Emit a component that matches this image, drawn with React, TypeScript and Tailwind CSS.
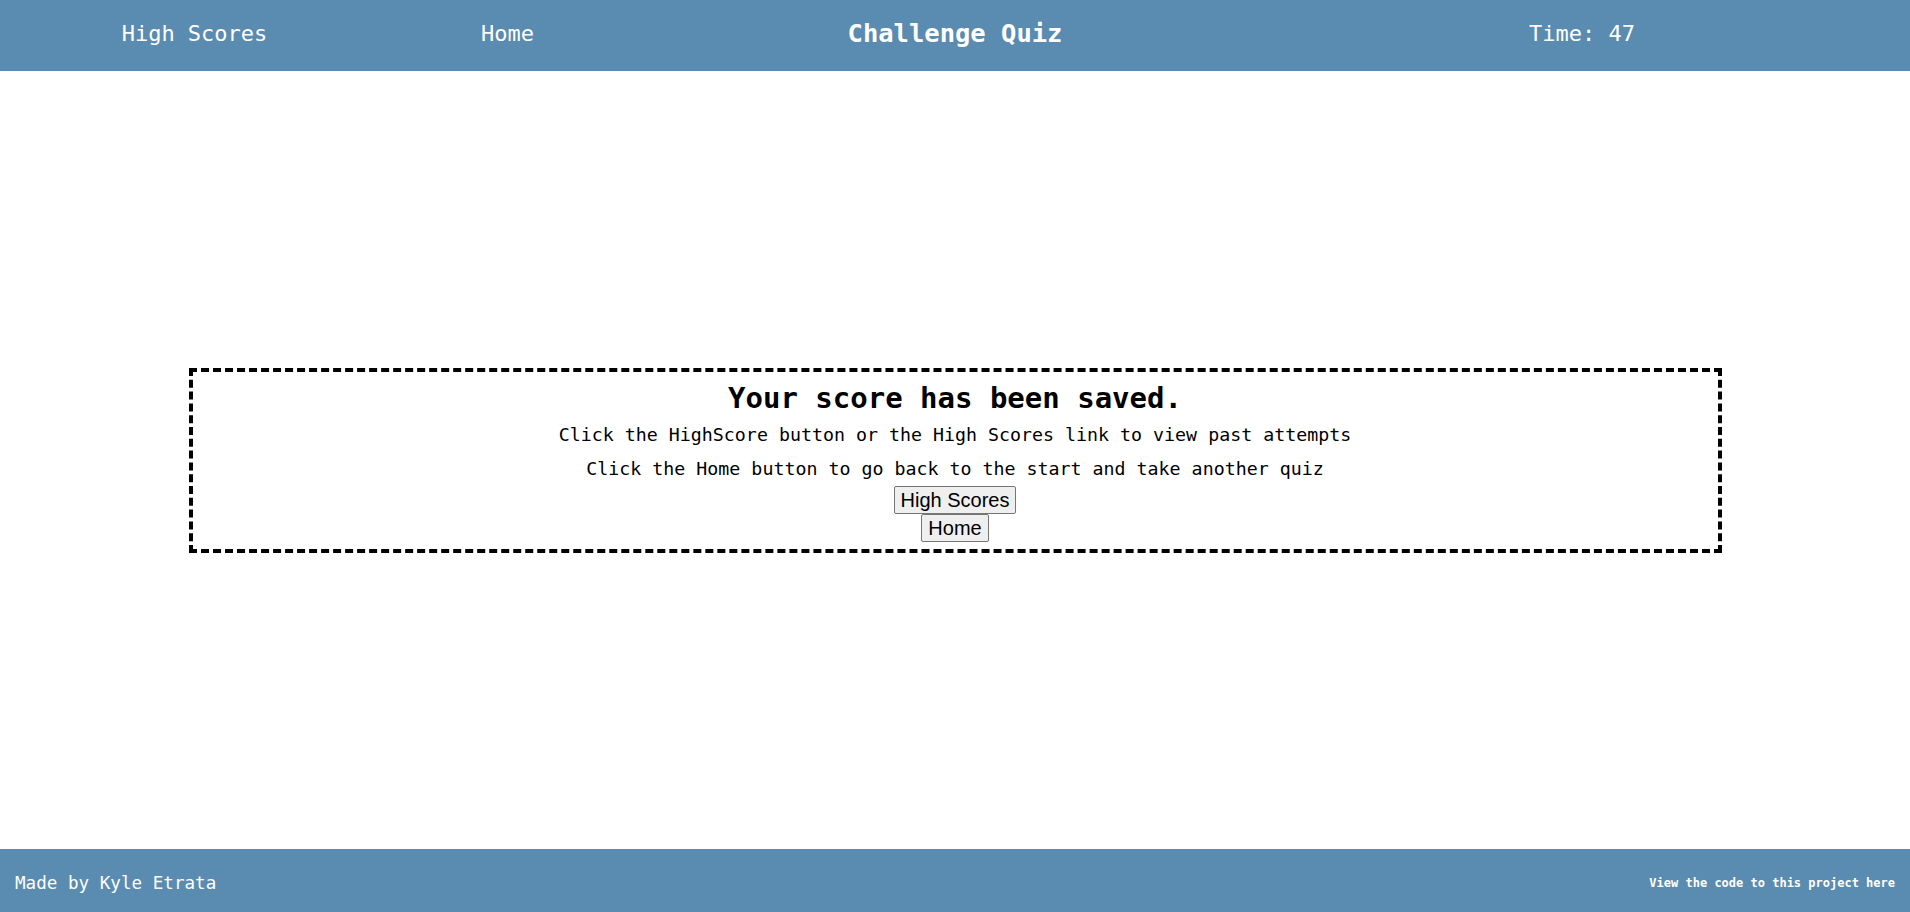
import React from "react";

export default function App() {
  const mono = { fontFamily: '"DejaVu Sans Mono", "Liberation Mono", monospace' };
  return (
    <div className="flex h-[912px] w-full flex-col bg-white text-black" style={mono}>
      <header className="flex h-[71px] shrink-0 items-center bg-[#5a8bb0] pb-[5px] text-white">
        <div className="flex w-[389px] justify-center text-[22px]">
          <a href="#">High Scores</a>
        </div>
        <div className="flex w-[237px] justify-center text-[22px]">
          <a href="#">Home</a>
        </div>
        <div className="flex w-[658px] justify-center text-[25.5px] font-bold">
          <h1>Challenge Quiz</h1>
        </div>
        <div className="flex w-[596px] justify-center text-[22px]">
          <span>Time: 47</span>
        </div>
      </header>

      <main className="flex flex-1 items-center justify-center">
        <div className="flex w-[1533px] flex-col items-center border-4 border-dashed border-black pt-[6px] pb-[7px]">
          <h2 className="h-[40px] text-[29px] font-bold leading-[40px]">Your score has been saved.</h2>
          <p className="mt-[5px] text-[18.3px] leading-[24px]">
            Click the HighScore button or the High Scores link to view past attempts
          </p>
          <p className="mt-[10px] text-[18.3px] leading-[24px]">
            Click the Home button to go back to the start and take another quiz
          </p>
          <div className="mt-[5px] flex flex-col items-center" style={{ fontFamily: '"Liberation Sans", Arial, sans-serif' }}>
            <button className="h-[28px] rounded-[2px] border border-[#767676] bg-[#efefef] px-[6px] text-[20px] leading-[24px] text-black">
              High Scores
            </button>
            <button className="h-[28px] rounded-[2px] border border-[#767676] bg-[#efefef] px-[6px] text-[20px] leading-[24px] text-black">
              Home
            </button>
          </div>
        </div>
      </main>

      <footer className="flex h-[63px] shrink-0 items-center justify-between bg-[#5a8bb0] px-[15px] pt-[5px] text-white">
        <span className="text-[17.6px]">Made by Kyle Etrata</span>
        <a href="#" className="text-[12px] font-bold">View the code to this project here</a>
      </footer>
    </div>
  );
}
